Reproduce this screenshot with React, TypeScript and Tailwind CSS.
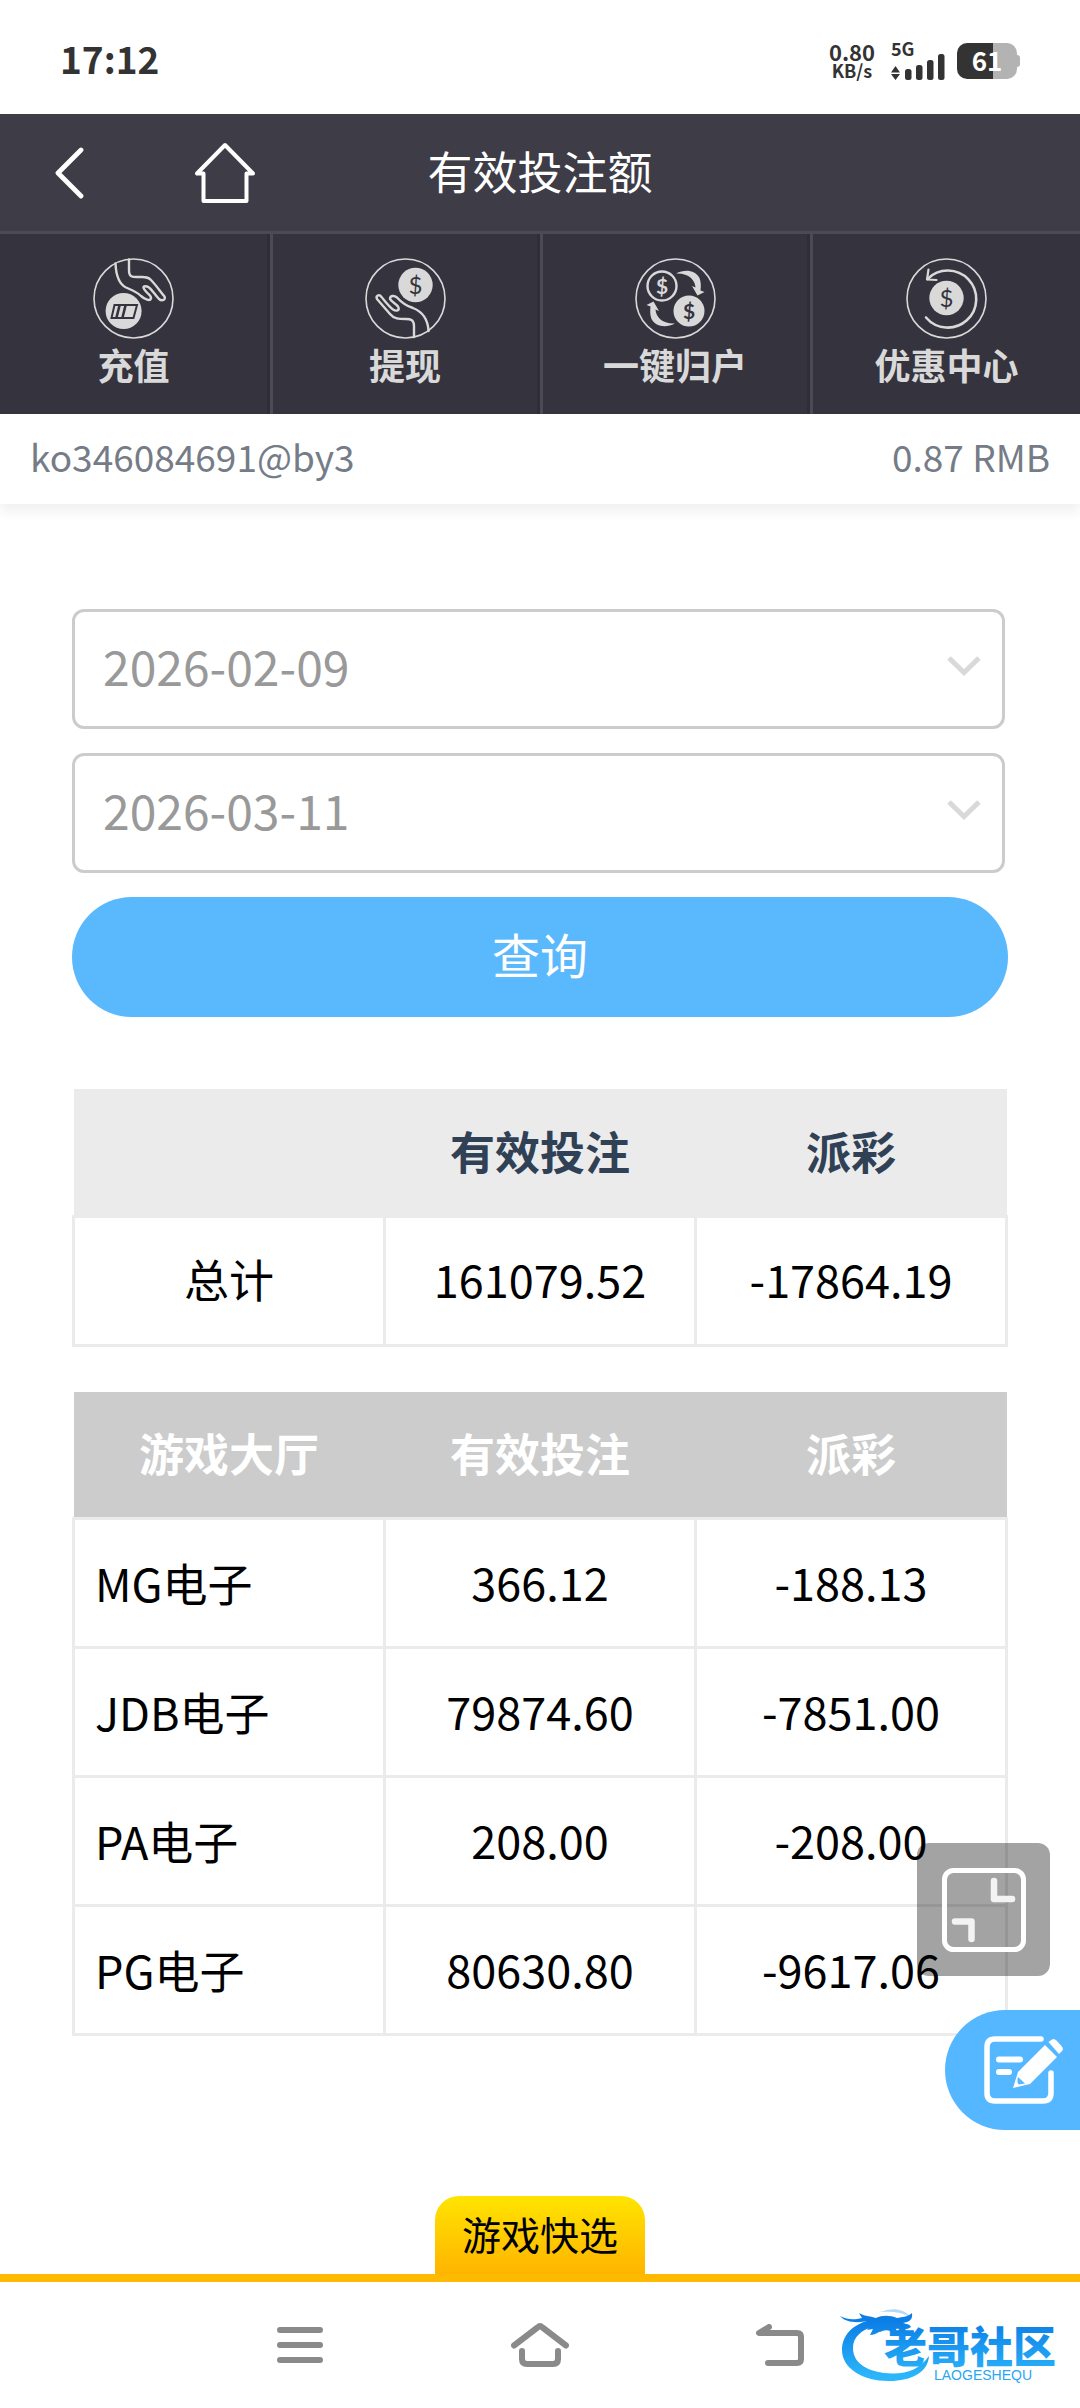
import React from 'react'

const quickLinks = [
  { label: '充值', icon: <DepositIcon /> },
  { label: '提现', icon: <WithdrawIcon /> },
  { label: '一键归户', icon: <CollectIcon /> },
  { label: '优惠中心', icon: <PromoIcon /> },
]

const halls = [
  { name: 'MG电子', bet: '366.12', payout: '-188.13' },
  { name: 'JDB电子', bet: '79874.60', payout: '-7851.00' },
  { name: 'PA电子', bet: '208.00', payout: '-208.00' },
  { name: 'PG电子', bet: '80630.80', payout: '-9617.06' },
]

function CircleIcon({ children }: { children: React.ReactNode }) {
  return (
    <svg viewBox="0 0 81 81" className="size-[81px]" fill="none" stroke="#d9d9d9" strokeLinecap="round" strokeLinejoin="round" aria-hidden="true">
      <circle cx="40.5" cy="40.5" r="39.5" strokeWidth="1.6" />
      {children}
    </svg>
  )
}

function Dollar({ x, y, size, fill, bold }: { x: number; y: number; size: number; fill: string; bold?: boolean }) {
  return (
    <text x={x} y={y} fontSize={size} fill={fill} stroke="none" textAnchor="middle" fontFamily="Lato, sans-serif" fontWeight={bold ? 700 : 400}>
      $
    </text>
  )
}

function DepositIcon() {
  return (
    <CircleIcon>
      <path
        strokeWidth="2.4"
        d="M22.5 5.5C23 17 26 26 33 29.500C39 32 44 34 48 38C52 41.500 57 43.500 58 40.500C58.500 38 56 37 53 33.500C49 29 50 27.500 54 28.500C58 29.500 61 36 66 41C69 43.500 73 42 71.500 38.500C67 33 62 26 58 22C55 18.500 52 19 47 19C40 19 36 20 36 12V1.500"
      />
      <circle cx="30.6" cy="53" r="18" fill="#d9d9d9" stroke="none" />
      <path d="M21.5 47H44L40.5 60H18.5Z" stroke="#35343e" strokeWidth="2" strokeLinejoin="miter" />
      <path d="M26.5 47.5L23.5 59.5M32.5 47.5L29.5 59.5" stroke="#35343e" strokeWidth="2.6" strokeLinecap="butt" />
    </CircleIcon>
  )
}

function WithdrawIcon() {
  return (
    <CircleIcon>
      <path
        strokeWidth="2.4"
        d="M49 79V68C49 62 46 61 41 61C34 61 29 61 25 56L12 41C10.500 38 14 35.500 16.500 39C20 43 24 48.500 28 51.500C32 54 35 52 33 48.500C31 45.500 26 43.500 25 41C25 37.500 29 37 32 39.500C37 45 41 48 48 50C58 54 63 62 63.500 73"
      />
      <circle cx="50.5" cy="27" r="17.2" fill="#d9d9d9" stroke="none" />
      <Dollar x={50.5} y={35.5} size={24} fill="#35343e" />
    </CircleIcon>
  )
}

function CollectIcon() {
  const arrow = 'M41 15.5C50 11 60 12 64.5 20C66 24 66 28 65.5 32.5L69.5 34L62.5 37.5L57 28L60.5 29.5C60 22 54 15 41 15.5Z'
  return (
    <CircleIcon>
      <circle cx="27" cy="28" r="14.5" strokeWidth="2.4" />
      <Dollar x={27} y={35.5} size={21} fill="#d9d9d9" bold />
      <circle cx="54" cy="53" r="15.5" fill="#d9d9d9" stroke="none" />
      <Dollar x={54} y={60.5} size={21} fill="#35343e" bold />
      <path d={arrow} fill="#d9d9d9" stroke="none" />
      <path d={arrow} fill="#d9d9d9" stroke="none" transform="rotate(180 40.5 40.5)" />
    </CircleIcon>
  )
}

function PromoIcon() {
  return (
    <CircleIcon>
      <circle cx="40.5" cy="40" r="17.2" fill="#d9d9d9" stroke="none" />
      <Dollar x={40.5} y={48.5} size={24} fill="#35343e" />
      <path d="M20 59.5A28.5 28.5 0 1 0 21.5 21" strokeWidth="2.6" />
      <path d="M22.5 11.5L21 21.5L30.5 22" strokeWidth="2.2" />
    </CircleIcon>
  )
}

function StatusBar() {
  return (
    <div className="flex h-[114px] items-center justify-between bg-white px-[60px] pt-2 font-bold text-[#333]">
      <span className="pb-1 text-[37px]">17:12</span>
      <div className="flex items-center gap-4">
        <div className="flex flex-col items-center">
          <span className="text-[22px] leading-[19px]">0.80</span>
          <span className="text-[18px] leading-[19px]">KB/s</span>
        </div>
        <div className="flex flex-col">
          <span className="text-[18px] leading-[12px]">5G</span>
          <svg viewBox="0 0 54 26" className="h-[26px] w-[54px]" fill="#333" aria-hidden="true">
            <path d="M0 18.5L4.5 12L9 18.5ZM0 20H9L4.5 26Z" />
            <rect x="14" y="15" width="6.5" height="11" rx="2.5" />
            <rect x="25" y="11" width="6.5" height="15" rx="2.5" />
            <rect x="36" y="6" width="6.5" height="20" rx="2.5" />
            <rect x="47" y="0" width="6.5" height="26" rx="2.5" />
          </svg>
        </div>
        <div className="-ml-1 flex items-center">
          <div className="flex h-9 w-[60px] items-center justify-center rounded-[10px] bg-linear-to-r from-[#333] from-60% to-[#b3b3b3] to-60% pb-0.5 text-[26px] leading-none text-white">
            61
          </div>
          <div className="h-3 w-[3px] rounded-r-sm bg-[#b3b3b3]" />
        </div>
      </div>
    </div>
  )
}

function Header() {
  return (
    <header>
      <div className="grid h-[120px] grid-cols-3 items-center border-b-3 border-[#4b4a55] bg-[#3e3c46] text-white">
        <div className="flex items-center gap-[110px] pl-[54px]">
          <button type="button" aria-label="返回">
            <svg viewBox="0 0 30 52" className="h-[52px] w-[30px]" fill="none" stroke="currentColor" strokeWidth="4.8" strokeLinecap="round" strokeLinejoin="round">
              <path d="M27 3L4 26L27 49" />
            </svg>
          </button>
          <a href="#home" aria-label="首页">
            <svg viewBox="0 0 62 62" className="size-[62px]" fill="none" stroke="currentColor" strokeWidth="4" strokeLinejoin="round" strokeLinecap="round">
              <path d="M31 3L3 31.5H9.5V59H52.5V31.5H59Z" />
            </svg>
          </a>
        </div>
        <h1 className="pb-1 text-center text-[45px] leading-[60px] whitespace-nowrap">有效投注额</h1>
      </div>
      <nav className="grid grid-cols-4 bg-[#35343e]">
        {quickLinks.map((item) => (
          <a
            key={item.label}
            href="#"
            className="flex h-[180px] flex-col items-center border-r-3 border-l-3 border-r-[#2f2e38] border-l-[#4b4a55] pt-6 first:border-l-0 last:border-r-0"
          >
            {item.icon}
            <span className="text-[36px] leading-[50px] font-bold whitespace-nowrap text-[#d9d9d9]">{item.label}</span>
          </a>
        ))}
      </nav>
    </header>
  )
}

function DateSelect({ label, value }: { label: string; value: string }) {
  return (
    <div className="relative mr-[3px]">
      <select
        aria-label={label}
        className="block h-[120px] w-full appearance-none rounded-[12px] border-3 border-[#ccc] bg-white px-7 pb-2 text-[48px] text-[#999]"
      >
        <option>{value}</option>
      </select>
      <svg viewBox="0 0 34 20" className="pointer-events-none absolute top-[47px] right-6 h-5 w-[34px]" fill="none" stroke="#d9d9d9" strokeWidth="5" aria-hidden="true">
        <path d="M2 2L17 16.5L32 2" />
      </svg>
    </div>
  )
}

const headCell = 'h-[127px] pb-0.5'
const cell = 'h-[129px] border-3 border-[#ebebeb]'

function SummaryTable() {
  return (
    <table className="mt-[72px] w-full table-fixed border-collapse text-center text-[45px] leading-[60px] text-black">
      <thead>
        <tr className="bg-[#ebebeb] text-[#304156]">
          <th className={headCell} />
          <th className={headCell}>有效投注</th>
          <th className={headCell}>派彩</th>
        </tr>
      </thead>
      <tbody>
        <tr>
          <td className={`${cell} pb-1`}>总计</td>
          <td className={`${cell} pb-1`}>161079.52</td>
          <td className={`${cell} pb-1`}>-17864.19</td>
        </tr>
      </tbody>
    </table>
  )
}

function HallTable() {
  return (
    <table className="mt-[45px] w-full table-fixed border-collapse text-center text-[45px] leading-[60px] text-black">
      <thead>
        <tr className="bg-[#ccc] text-white">
          <th className={headCell}>游戏大厅</th>
          <th className={headCell}>有效投注</th>
          <th className={headCell}>派彩</th>
        </tr>
      </thead>
      <tbody>
        {halls.map((hall) => (
          <tr key={hall.name}>
            <td className={`${cell} pl-5 text-left`}>{hall.name}</td>
            <td className={`${cell} pb-0.5`}>{hall.bet}</td>
            <td className={`${cell} pb-0.5`}>{hall.payout}</td>
          </tr>
        ))}
      </tbody>
    </table>
  )
}

function FloatingButtons() {
  return (
    <div className="fixed right-0 bottom-[278px] flex flex-col items-end gap-[34px]">
      <button type="button" aria-label="收起" className="mr-[30px] flex size-[133px] items-center justify-center rounded-[12px] bg-black/36">
        <svg viewBox="0 0 84 84" className="size-[84px]" fill="none" stroke="#fff">
          <rect x="2.5" y="2.5" width="79" height="79" rx="9" strokeWidth="5" />
          <path d="M52 13V31H70M13 53.5H29.5V71" stroke="#f3f3f3" strokeWidth="6.5" strokeLinecap="round" strokeLinejoin="round" />
        </svg>
      </button>
      <button type="button" aria-label="反馈" className="flex h-[120px] w-[135px] items-center justify-end rounded-l-full bg-[#55b7ff] pr-4">
        <svg viewBox="0 0 80 68" className="h-[68px] w-[80px]" fill="none" stroke="#fff" strokeLinecap="round" strokeLinejoin="round">
          <path d="M57 3H11Q3 3 3 11V57Q3 65 11 65H59Q67 65 67 57V37" strokeWidth="5.5" />
          <path d="M15 23.5H36M15 36H25" strokeWidth="6" />
          <path d="M61 9L73 21L46 48L29 52L34 36Z" fill="#fff" stroke="none" />
          <path d="M64.5 6L68 3.5Q70 2 72.5 4.5L77.5 10Q80 13 78 15L75 18Z" fill="#fff" stroke="none" />
          <path d="M34 41L41 47.5L34.5 48.5Q33 46 33.5 43Z" fill="#55b7ff" stroke="none" />
        </svg>
      </button>
    </div>
  )
}

function BrandLogo() {
  return (
    <svg viewBox="0 0 224 76" className="h-[76px] w-[224px]" role="img" aria-label="老哥社区">
      <defs>
        <linearGradient id="brand" x1="0" y1="0" x2="0" y2="76" gradientUnits="userSpaceOnUse">
          <stop offset="0.2" stopColor="#0c7fe6" />
          <stop offset="0.9" stopColor="#2bb5fa" />
        </linearGradient>
      </defs>
      <g fill="url(#brand)">
        <path d="M31 13C12 17 2 29 2 43C2 61 22 74 49 74C72 74 88 65 89 49C80 62 67 67 52 66.5C29 66 13 57 13 41C13 30 21 23 35 19Z" />
        <path d="M0 9C8 13 14 13 22 11L19 6C26 10 31 9 36 11C42 8 50 8 57 11C62 10 68 10 72 6C73 13 69 15 63 16C66 17 70 17 71 20C66 24 60 21 56 22C57 25 54 27 50 24C45 22 42 25 39 25C36 27 33 28 30 28L33 22L27 23L31 18L24 17L28 14C18 16 6 16 0 9Z" />
        <path d="M40 5C50 1 62 0 71 10C62 5 52 4 40 5Z" opacity="0.3" />
      </g>
      <text x="44" y="56" fontSize="43" fontWeight="900" fill="url(#brand)" fontFamily="'Noto Sans CJK SC', sans-serif">
        老哥社区
      </text>
      <text x="94" y="73" fontSize="14" fill="#2aa6f2" fontFamily="'Liberation Sans', sans-serif">
        LAOGESHEQU
      </text>
    </svg>
  )
}

function BottomBar() {
  return (
    <footer className="mt-auto bg-white">
      <div className="flex justify-center border-b-8 border-[#ffb900]">
        <button type="button" className="h-[78px] rounded-t-[24px] bg-linear-to-b from-[#ffe400] to-[#ffb400] px-[27px] pb-1 text-[39px] leading-none whitespace-nowrap text-black">
          游戏快选
        </button>
      </div>
      <div className="grid h-[126px] grid-cols-9 items-center text-[#8a8a8a]">
        <button type="button" aria-label="菜单" className="col-start-3 justify-self-center">
          <svg viewBox="0 0 46 36" className="h-9 w-[46px]" stroke="currentColor" strokeWidth="6" strokeLinecap="round">
            <path d="M3 3H43M3 18H43M3 33H43" />
          </svg>
        </button>
        <button type="button" aria-label="主屏幕" className="col-start-5 justify-self-center">
          <svg viewBox="0 0 58 44" className="h-11 w-[58px]" fill="none" stroke="currentColor" strokeWidth="6" strokeLinecap="round" strokeLinejoin="round">
            <path d="M3 22.5L26.5 4.5Q29 2 31.5 4.5L55 22.5M11 28V36Q11 41 16 41H42Q47 41 47 36V28" />
          </svg>
        </button>
        <button type="button" aria-label="后退" className="col-start-7 justify-self-center">
          <svg viewBox="0 0 48 42" className="h-[42px] w-[48px]" fill="none" stroke="currentColor" strokeWidth="6" strokeLinecap="round" strokeLinejoin="round">
            <path d="M13 3L3 9H41Q45 9 45 13V35Q45 39 41 39H12" />
          </svg>
        </button>
        <div className="col-span-2">
          <BrandLogo />
        </div>
      </div>
    </footer>
  )
}

export default function App() {
  return (
    <div className="flex min-h-screen flex-col bg-white font-['Noto_Sans_CJK_SC',sans-serif]">
      <StatusBar />
      <Header />
      <div className="flex h-[90px] items-center justify-between px-[30px] pb-1 text-[37px] text-[#767c87] shadow-[0_8px_12px_rgba(0,0,0,0.06)]">
        <span>ko346084691@by3</span>
        <span>0.87 RMB</span>
      </div>
      <main className="px-[72px] pt-[105px] pb-12">
        <form className="flex flex-col gap-6" onSubmit={(e) => e.preventDefault()}>
          <DateSelect label="开始日期" value="2026-02-09" />
          <DateSelect label="结束日期" value="2026-03-11" />
          <button type="submit" className="h-[120px] rounded-full bg-[#5ab8fd] pb-2 text-[48px] text-white">
            查询
          </button>
        </form>
        <SummaryTable />
        <HallTable />
      </main>
      <BottomBar />
      <FloatingButtons />
    </div>
  )
}
